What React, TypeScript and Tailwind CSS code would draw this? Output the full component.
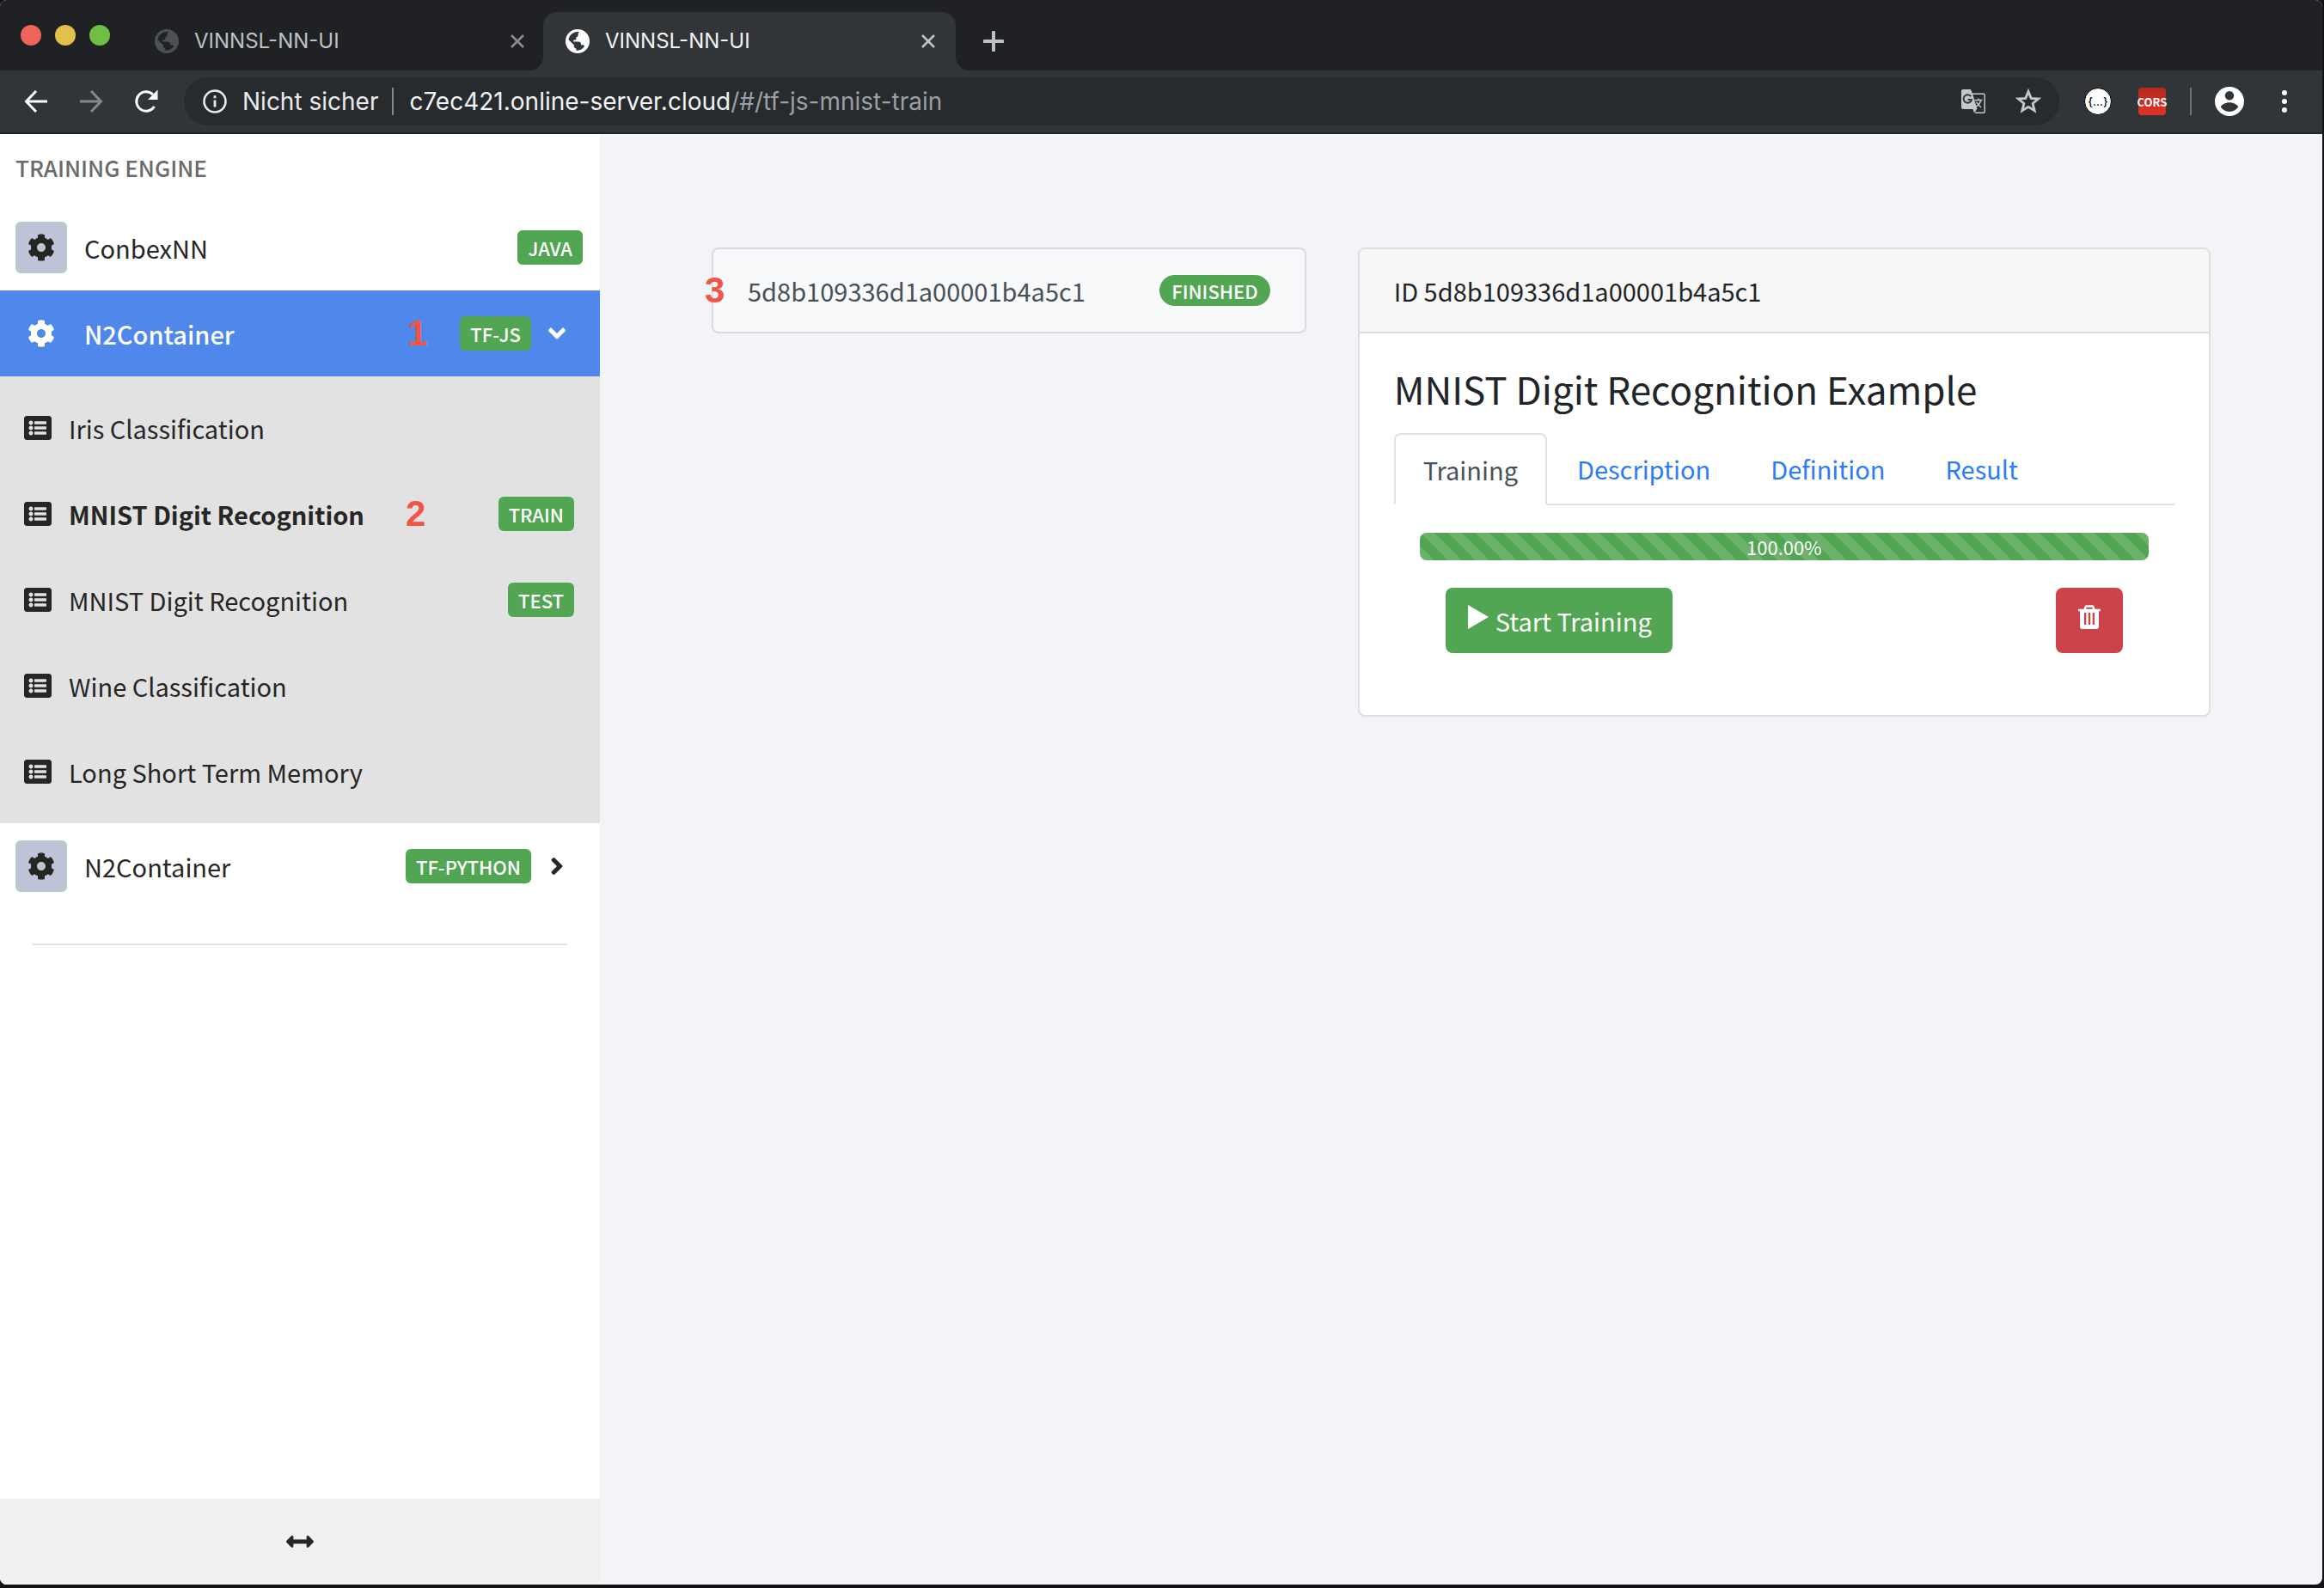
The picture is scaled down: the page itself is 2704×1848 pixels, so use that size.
import React from "react";
import { FaAngleDown, FaAngleRight, FaArrowsAltH, FaCog, FaListAlt } from "react-icons/fa";

const BROWSER_FONT = "font-['Inter',sans-serif]";

function Globe({ className }: { className: string }) {
  return (
    <svg viewBox="0 0 28 28" className={`size-7 shrink-0 ${className}`} aria-hidden="true">
      <path
        fill="currentColor"
        fillRule="evenodd"
        d="M14 0a14 14 0 1 0 0 28 14 14 0 0 0 0-28Zm2 3.2c-.7.6-1.300 1.500-1.300 2.300v1.200c0 1.500-1 2.300-2.300 2.300v2c0 1-.8 1.600-1.700 1.600H9.300v2h6c1.500 0 2.700 1 2.700 2.500v1.200h1.700c1.200 0 2 .6 2.400 1.500A10.800 10.800 0 0 1 14 24.800c-.6 0-1-.1-1.600-.2v-2.200c-1.500 0-2.600-1.200-2.600-2.600v-1.500L3.500 12.200A10.800 10.800 0 0 1 16 3.200Z"
      />
    </svg>
  );
}

function CloseIcon() {
  return (
    <svg viewBox="0 0 18 18" className="size-[18px]" aria-hidden="true">
      <path d="M2 2l14 14M16 2L2 16" stroke="currentColor" strokeWidth="2.600" fill="none" />
    </svg>
  );
}

function TrashIcon() {
  return (
    <svg viewBox="0 0 26 28" className="mb-2 h-7 w-[26px]" aria-hidden="true">
      <path d="M7.500 5.500L9 1.500h8l1.500 4" stroke="currentColor" strokeWidth="2.400" strokeLinejoin="round" fill="none" />
      <path
        fill="currentColor"
        fillRule="evenodd"
        d="M0 4.700h26v2.600h-2V25a3 3 0 0 1-3 3H5a3 3 0 0 1-3-3V7.300H0ZM7 9v14h2.300V9Zm4.800 0v14h2.400V9Zm4.900 0v14H19V9Z"
      />
    </svg>
  );
}

function BrowserTab({ active, title }: { active?: boolean; title: string }) {
  return (
    <div
      className={
        active
          ? "relative flex h-[68px] w-[480px] items-center rounded-t-2xl bg-[#323538] pl-[26px] pr-[23px] text-[#f1f3f4]"
          : "flex h-[68px] w-[478px] items-center pl-[26px] pr-[21px] text-[#bdc1c6]"
      }
    >
      {active && (
        <>
          <span className="absolute bottom-0 right-full size-4 bg-[radial-gradient(circle_at_0_0,#202124_16px,#323538_16px)]" />
          <span className="absolute bottom-0 left-full size-4 bg-[radial-gradient(circle_at_100%_0,#202124_16px,#323538_16px)]" />
        </>
      )}
      <Globe className={active ? "text-white" : "text-[#4d5156]"} />
      <span className="ml-[18px] flex-1 text-[24px] leading-8">{title}</span>
      <button type="button" aria-label="Close tab" className={active ? "text-[#bdc1c6]" : "text-[#8a8d91]"}>
        <CloseIcon />
      </button>
    </div>
  );
}

function BrowserChrome() {
  return (
    <header className={`${BROWSER_FONT} bg-[#202124]`}>
      <div className="flex h-[82px] items-end">
        <div className="flex h-full w-[154px] shrink-0 items-center gap-4 pl-6">
          <span className="size-6 rounded-full bg-[#f0655b]" />
          <span className="size-6 rounded-full bg-[#e1c04c]" />
          <span className="size-6 rounded-full bg-[#6fbf47]" />
        </div>
        <BrowserTab title="VINNSL-NN-UI" />
        <BrowserTab title="VINNSL-NN-UI" active />
        <button type="button" aria-label="New tab" className="ml-8 flex h-[68px] items-center text-[#bdc1c6]">
          <svg viewBox="0 0 24 24" className="size-6" aria-hidden="true">
            <path d="M12 1.500v21M1.500 12h21" stroke="currentColor" strokeWidth="4" strokeLinecap="round" />
          </svg>
        </button>
      </div>
      <div className="flex h-[74px] items-center border-b-2 border-[#222427] bg-[#323538] pl-7 pr-[41px] text-white">
        <button type="button" aria-label="Back">
          <svg viewBox="0 0 28 28" className="size-7" aria-hidden="true">
            <path d="M27 14H3M14 2L2.500 14 14 26" stroke="#fff" strokeWidth="3" fill="none" />
          </svg>
        </button>
        <button type="button" aria-label="Forward" className="ml-9">
          <svg viewBox="0 0 28 28" className="size-7" aria-hidden="true">
            <path d="M1 14h24M14 2l11.500 12L14 26" stroke="#85888b" strokeWidth="3" fill="none" />
          </svg>
        </button>
        <button type="button" aria-label="Reload" className="ml-9">
          <svg viewBox="0 0 28 28" className="size-7" aria-hidden="true">
            <path d="M23.500 20A11.200 11.200 0 1 1 21.800 6" stroke="#fff" strokeWidth="3" fill="none" />
            <path d="M27.500 .5V12H16z" fill="#fff" />
          </svg>
        </button>
        <div className="ml-[30px] flex h-14 flex-1 items-center rounded-full bg-[#282b2e] pl-[22px] pr-5">
          <svg viewBox="0 0 28 28" className="size-7 shrink-0" aria-hidden="true">
            <circle cx="14" cy="14" r="12.500" stroke="#e8eaed" strokeWidth="2.600" fill="none" />
            <path d="M14 12.500v8M14 7.300v3" stroke="#e8eaed" strokeWidth="2.800" />
          </svg>
          <span className="ml-[18px] text-[28px] leading-9 text-[#e8eaed]">Nicht sicher</span>
          <span className="ml-4 h-8 w-0.5 bg-[#85888b]" />
          <div
            role="textbox"
            aria-label="Address"
            contentEditable
            suppressContentEditableWarning
            spellCheck={false}
            className="ml-[18px] flex-1 text-[28px] leading-9 text-[#f1f3f4] outline-none"
          >
            c7ec421.online-server.cloud<span className="text-[#9aa0a6]">/#/tf-js-mnist-train</span>
          </div>
          <button type="button" aria-label="Translate">
            <svg viewBox="0 0 28 28" className="size-7" aria-hidden="true">
              <path d="M13 5.200h13.200a1 1 0 0 1 1 1v20a1 1 0 0 1-1 1H16" stroke="#c4c7cb" strokeWidth="1.500" fill="none" />
              <path d="M2 0h9l2 5 5.500 18H2a2 2 0 0 1-2-2V2a2 2 0 0 1 2-2Z" fill="#c4c7cb" />
              <path d="M13.500 23H18l-3 4.500z" fill="#c4c7cb" />
              <path d="M11.200 8.200A4.700 4.700 0 1 0 12 12H7.500" stroke="#35383b" strokeWidth="2" fill="none" />
              <path d="M15.500 12.500h9M20 10.500v2M22.800 12.500c-.8 3.500-3 6-5.500 7.500M17.500 14.500c1 2 3 4.500 5.500 6.500" stroke="#c4c7cb" strokeWidth="1.500" fill="none" />
            </svg>
          </button>
          <button type="button" aria-label="Bookmark" className="ml-[34px]">
            <svg viewBox="0 0 32 32" className="size-8" aria-hidden="true">
              <path d="M16 4.500l3.200 7.900 8.500.6-6.600 5.500 2.100 8.300-7.200-4.500-7.200 4.500 2.100-8.300L4.300 13l8.500-.6z" stroke="#c4c7cb" strokeWidth="2.800" fill="none" />
            </svg>
          </button>
        </div>
        <button type="button" aria-label="JSON viewer" className="ml-[29px] flex size-8 items-center justify-center rounded-full border border-black bg-white text-[13px] font-medium leading-none text-black">
          {"{...}"}
        </button>
        <button
          type="button"
          aria-label="CORS"
          className="ml-[31px] flex size-8 items-center justify-center rounded bg-linear-to-b from-[#b5281f] to-[#e33328] font-['Noto_Sans_CJK_SC',sans-serif] text-[13px] font-bold leading-none text-white"
        >
          <span className="-mx-1">CORS</span>
        </button>
        <span className="ml-7 h-8 w-0.5 bg-[#6f7275]" />
        <button type="button" aria-label="Profile" className="ml-[27px]">
          <svg viewBox="0 0 34 34" className="size-[34px]" aria-hidden="true">
            <circle cx="17" cy="17" r="17" fill="#fff" />
            <circle cx="17" cy="10.200" r="5.200" fill="#323538" />
            <path d="M6.800 23.200C8.500 19.800 13.500 18.200 17 18.200s8.500 1.600 10.200 5C25.300 26.600 21.400 28.900 17 28.900S8.700 26.600 6.800 23.200Z" fill="#323538" />
          </svg>
        </button>
        <button type="button" aria-label="Menu" className="ml-11 flex flex-col gap-1">
          <span className="size-1.5 rounded-full bg-white" />
          <span className="size-1.5 rounded-full bg-white" />
          <span className="size-1.5 rounded-full bg-white" />
        </button>
      </div>
    </header>
  );
}

function Badge({ children }: { children: React.ReactNode }) {
  return (
    <span className="flex h-10 items-center rounded-md bg-[#52a552] px-3 text-[22px] font-medium leading-7 text-white">{children}</span>
  );
}

function Marker({ children }: { children: React.ReactNode }) {
  return <span className="font-['Liberation_Sans',sans-serif] text-[42px] font-bold leading-[48px] text-[#f05545]">{children}</span>;
}

type EngineRowProps = {
  name: string;
  badge: string;
  active?: boolean;
  marker?: string;
  arrow?: "down" | "right";
};

function EngineRow({ name, badge, active, marker, arrow }: EngineRowProps) {
  return (
    <a
      href="#engine"
      className={
        active
          ? "flex h-[100px] items-center bg-[#4f87ea] pl-[18px] pr-5 font-medium text-white"
          : "flex h-[100px] items-center bg-white pl-[18px] pr-5 text-[#262626]"
      }
    >
      <span className={active ? "flex size-[60px] items-center justify-center" : "flex size-[60px] items-center justify-center rounded-md bg-[#bbc5d6]"}>
        <FaCog className="size-8" />
      </span>
      <span className="ml-5 flex-1 text-[29px] leading-10">{name}</span>
      {marker && (
        <span className="mr-[38px]">
          <Marker>{marker}</Marker>
        </span>
      )}
      <Badge>{badge}</Badge>
      {arrow && (
        <span className="flex w-[60px] justify-center">
          {arrow === "down" ? <FaAngleDown className="size-8" /> : <FaAngleRight className="size-8" />}
        </span>
      )}
    </a>
  );
}

type SubItem = { name: string; badge?: string; current?: boolean; marker?: string };

const SUB_ITEMS: SubItem[] = [
  { name: "Iris Classification" },
  { name: "MNIST Digit Recognition", badge: "TRAIN", current: true, marker: "2" },
  { name: "MNIST Digit Recognition", badge: "TEST" },
  { name: "Wine Classification" },
  { name: "Long Short Term Memory" },
];

function Sidebar() {
  return (
    <aside className="flex w-[698px] shrink-0 flex-col bg-white text-[#262626]">
      <h2 className="flex h-[82px] items-center px-[18px] pb-1 text-[26px] font-medium leading-8 text-[#6b6b6b]">TRAINING ENGINE</h2>
      <nav>
        <EngineRow name="ConbexNN" badge="JAVA" />
        <EngineRow name="N2Container" badge="TF-JS" active marker="1" arrow="down" />
        <ul className="bg-[#e2e2e2] py-2.5">
          {SUB_ITEMS.map((item, i) => (
            <li key={i}>
              <a href="#example" className="flex h-[100px] items-center pl-7 pr-[30px]">
                <FaListAlt className="size-8" />
                <span className={item.current ? "ml-5 text-[29px] font-bold leading-10" : "ml-5 text-[29px] leading-10"}>{item.name}</span>
                {item.marker && (
                  <span className="ml-12">
                    <Marker>{item.marker}</Marker>
                  </span>
                )}
                <span className="flex-1" />
                {item.badge && <Badge>{item.badge}</Badge>}
              </a>
            </li>
          ))}
        </ul>
        <EngineRow name="N2Container" badge="TF-PYTHON" arrow="right" />
      </nav>
      <hr className="mx-[38px] mt-10 border-t-2 border-[#e3e3e3]" />
      <button type="button" aria-label="Collapse sidebar" className="mt-auto flex h-[100px] items-center justify-center bg-[#f1f1f1]">
        <FaArrowsAltH className="size-8" />
      </button>
    </aside>
  );
}

function TrainingCard() {
  return (
    <section className="overflow-hidden rounded-lg border-2 border-[#dfdfdf] bg-white text-[#212529]">
      <header className="flex h-[98px] items-center border-b-2 border-[#dadbdb] bg-[#f7f7f7] px-10 text-[29px] leading-10">ID 5d8b109336d1a00001b4a5c1</header>
      <div className="px-10 pb-[72px] pt-[34px]">
        <h1 className="text-[44px] leading-[60px]">MNIST Digit Recognition Example</h1>
        <div role="tablist" className="mt-[22px] flex border-b-2 border-[#dee2e6] text-[29px] leading-10">
          <button
            type="button"
            role="tab"
            aria-selected="true"
            className="-mb-0.5 h-[84px] rounded-t-lg border-2 border-[#dee2e6] border-b-white bg-white px-8 text-[#495057]"
          >
            Training
          </button>
          <button type="button" role="tab" aria-selected="false" className="h-[82px] px-[35px] text-[#2b7cf6]">
            Description
          </button>
          <button type="button" role="tab" aria-selected="false" className="h-[82px] px-[35px] text-[#2b7cf6]">
            Definition
          </button>
          <button type="button" role="tab" aria-selected="false" className="h-[82px] px-[35px] text-[#2b7cf6]">
            Result
          </button>
        </div>
        <div className="px-[30px] pt-8">
          <div
            role="progressbar"
            aria-label="Training progress"
            aria-valuenow={100}
            className="flex h-8 items-center justify-center rounded-lg bg-[#52a552] bg-[linear-gradient(45deg,rgba(255,255,255,.15)_25%,transparent_25%,transparent_50%,rgba(255,255,255,.15)_50%,rgba(255,255,255,.15)_75%,transparent_75%,transparent)] bg-[length:32px_32px] text-[22px] leading-8 text-white"
          >
            100.00%
          </div>
          <div className="mt-8 flex justify-between px-[30px]">
            <button type="button" className="flex h-[76px] items-center gap-2 rounded-lg bg-[#52a552] pl-[26px] pr-6 text-[29px] leading-10 text-white">
              <svg viewBox="0 0 24 28" className="mb-2 h-7 w-6" aria-hidden="true">
                <path d="M0 0l24 14L0 28z" fill="currentColor" />
              </svg>
              Start Training
            </button>
            <button type="button" aria-label="Delete" className="flex h-[76px] w-[78px] items-center justify-center rounded-lg bg-[#cb444a] text-white">
              <TrashIcon />
            </button>
          </div>
        </div>
      </div>
    </section>
  );
}

export default function App() {
  return (
    <div className="flex min-h-screen flex-col bg-[#111213] pb-1 pr-0.5 font-['Noto_Sans_CJK_SC',sans-serif]">
      <div className="flex flex-1 flex-col overflow-hidden rounded-lg bg-[#f2f4f8]">
        <BrowserChrome />
        <div className="flex flex-1">
          <Sidebar />
          <main className="grid flex-1 grid-cols-12 items-start px-[100px] pt-[132px]">
            <div className="col-span-5 px-[30px]">
              <a href="#run" className="relative flex h-[100px] items-center justify-between rounded-lg border-2 border-[#d9dbde] bg-[#f8f9fb] px-10 text-[29px] leading-10 text-[#495057]">
                <span className="absolute -left-2.5">
                  <Marker>3</Marker>
                </span>
                <span>5d8b109336d1a00001b4a5c1</span>
                <span className="flex h-9 items-center rounded-full bg-[#52a552] px-[14px] text-[22px] font-medium leading-7 text-white">FINISHED</span>
              </a>
            </div>
            <div className="col-span-7 px-[30px]">
              <TrainingCard />
            </div>
          </main>
        </div>
      </div>
    </div>
  );
}
